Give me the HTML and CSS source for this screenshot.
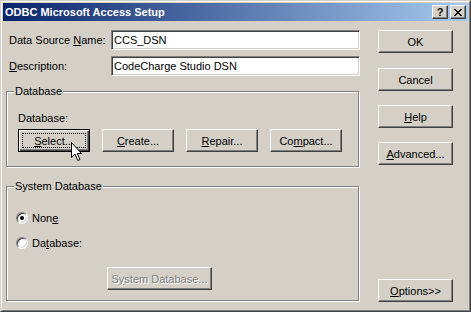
FILE: index.html
```html
<!DOCTYPE html>
<html lang="en">
  <head>
    <meta charset="utf-8" />
    <title>ODBC Microsoft Access Setup</title>
    <link rel="stylesheet" href="styles.css">
  </head>
  <body>
    <div class="window">
      <div class="frame">

        <div class="titlebar">
          <span class="title">ODBC Microsoft Access Setup</span>
          <div class="caption-btns">
            <span class="cap-btn help-glyph">?</span>
            <span class="cap-btn">
              <svg width="8" height="7" viewBox="0 0 8 7" shape-rendering="crispEdges">
                <path d="M0 0h2v1H0z M6 0h2v1H6z M1 1h2v1H1z M5 1h2v1H5z M2 2h4v1H2z M3 3h2v1H3z M2 4h4v1H2z M1 5h2v1H1z M5 5h2v1H5z M0 6h2v1H0z M6 6h2v1H6z" fill="#000"/>
              </svg>
            </span>
          </div>
        </div>

        <div class="content">
          <div class="main">
            <div class="field-row">
              <label class="field-label">Data Source <u>N</u>ame:</label>
              <div class="textbox">CCS_DSN</div>
            </div>
            <div class="field-row second">
              <label class="field-label"><u>D</u>escription:</label>
              <div class="textbox">CodeCharge Studio DSN</div>
            </div>

            <div class="group db-group">
              <span class="legend">Database</span>
              <div class="group-label">Database:</div>
              <div class="btn-row">
                <button class="btn small default"><u>S</u>elect...</button>
                <button class="btn small"><u>C</u>reate...</button>
                <button class="btn small"><u>R</u>epair...</button>
                <button class="btn small">Co<u>m</u>pact...</button>
              </div>
            </div>

            <div class="group sys-group">
              <span class="legend">System Database</span>
              <div class="radio-row">
                <span class="radio checked"></span>
                <span>Non<u>e</u></span>
              </div>
              <div class="radio-row second">
                <span class="radio"></span>
                <span>Da<u>t</u>abase:</span>
              </div>
              <button class="btn sys-btn" disabled>S<u>y</u>stem Database...</button>
            </div>
          </div>

          <div class="side">
            <button class="btn">OK</button>
            <button class="btn cancel">Cancel</button>
            <button class="btn gap"><u>H</u>elp</button>
            <button class="btn gap"><u>A</u>dvanced...</button>
            <button class="btn options"><u>O</u>ptions&gt;&gt;</button>
          </div>
        </div>

      </div>

      <svg class="cursor" width="13" height="20" viewBox="0 0 13 20">
        <path d="M0.5 0.5 L0.5 15.5 L4 12 L6.8 18.5 L9 17.5 L6.3 11.5 L10.5 11.5 Z" fill="#fff" stroke="#000" stroke-width="1" stroke-linejoin="miter"/>
      </svg>
    </div>
  </body>
</html>
```

FILE: styles.css
```css
body {
     margin: 0;
     font-family: "Liberation Sans", Arial, sans-serif;
     font-size: 11px;
     color: #000;
}

.window {
     position: relative;
     width: 471px;
     height: 312px;
     box-sizing: border-box;
     border: 1px solid;
     border-color: #d4d0c8 #404040 #404040 #d4d0c8;
     background-color: #d4d0c8;
}

.frame {
     height: 100%;
     box-sizing: border-box;
     border: 1px solid;
     border-color: #fff #808080 #808080 #fff;
     padding: 1px;
     display: flex;
     flex-direction: column;
}

.titlebar {
     height: 18px;
     flex-shrink: 0;
     display: flex;
     align-items: center;
     justify-content: space-between;
     padding: 0 2px;
     background: linear-gradient(to right, #0a246a, #a6caf0);
}

.title {
     color: #fff;
     font-weight: bold;
     font-size: 11px;
}

.caption-btns {
     display: flex;
     gap: 2px;
}

.cap-btn {
     width: 16px;
     height: 14px;
     box-sizing: border-box;
     display: flex;
     align-items: center;
     justify-content: center;
     background-color: #d4d0c8;
     border: 1px solid;
     border-color: #fff #404040 #404040 #fff;
     box-shadow: inset -1px -1px 0 #808080;
}

.help-glyph {
     font-weight: bold;
     font-size: 11px;
     line-height: 1;
}

.content {
     flex: 1;
     display: flex;
     gap: 18px;
     padding: 9px 0 7px 3px;
}

.main {
     width: 354px;
     display: flex;
     flex-direction: column;
}

.field-row {
     display: flex;
     align-items: center;
     height: 20px;
     padding-left: 3px;
}

.field-row.second {
     margin-top: 6px;
}

.field-label {
     width: 102px;
}

.textbox {
     width: 249px;
     height: 20px;
     box-sizing: border-box;
     border: 1px solid;
     border-color: #808080 #fff #fff #808080;
     box-shadow: inset 1px 1px 0 #404040, inset -1px -1px 0 #d4d0c8;
     background-color: #fff;
     padding-left: 2px;
     line-height: 18px;
}

.group {
     position: relative;
     width: 353px;
     box-sizing: border-box;
     border: 1px solid #808080;
     box-shadow: inset 1px 1px 0 #fff, 1px 1px 0 #fff;
}

.legend {
     position: absolute;
     top: -7px;
     left: 7px;
     padding: 0 1px;
     line-height: 13px;
     background-color: #d4d0c8;
}

.db-group {
     margin-top: 15px;
     height: 76px;
     padding: 20px 0 0 11px;
}

.group-label {
     line-height: 13px;
}

.btn-row {
     display: flex;
     gap: 12px;
     margin-top: 4px;
}

.btn {
     position: relative;
     width: 75px;
     height: 23px;
     box-sizing: border-box;
     padding: 0;
     margin: 0;
     font-family: inherit;
     font-size: 11px;
     color: #000;
     background-color: #d4d0c8;
     border: 1px solid;
     border-color: #fff #404040 #404040 #fff;
     box-shadow: inset -1px -1px 0 #808080;
     border-radius: 0;
}

.btn.small {
     width: 72px;
}

.btn.default {
     border-color: #000;
     box-shadow: inset 1px 1px 0 #fff, inset -1px -1px 0 #404040, inset -2px -2px 0 #808080;
}

.btn.default::after {
     content: "";
     position: absolute;
     top: 3px;
     left: 3px;
     right: 3px;
     bottom: 3px;
     border: 1px dotted #000;
}

.btn:disabled {
     color: #808080;
     text-shadow: 1px 1px 0 #fff;
}

.sys-group {
     margin-top: 19px;
     height: 115px;
     padding: 23px 0 0 9px;
}

.radio-row {
     display: flex;
     align-items: center;
     gap: 4px;
     height: 16px;
}

.radio-row.second {
     margin-top: 9px;
}

.radio {
     position: relative;
     width: 12px;
     height: 12px;
     box-sizing: border-box;
     border-radius: 50%;
     border: 1px solid;
     border-color: #808080 #fff #fff #808080;
     box-shadow: inset 1px 1px 0 #404040, inset -1px -1px 0 #d4d0c8;
     background-color: #fff;
}

.radio.checked::after {
     content: "";
     position: absolute;
     top: 3px;
     left: 3px;
     width: 4px;
     height: 4px;
     border-radius: 50%;
     background-color: #000;
}

.sys-btn {
     width: 105px;
     margin: 16px 0 0 91px;
}

.side {
     width: 75px;
     display: flex;
     flex-direction: column;
}

.side .cancel {
     margin-top: 15px;
}

.side .gap {
     margin-top: 14px;
}

.side .options {
     margin-top: auto;
}

.cursor {
     position: absolute;
     left: 70px;
     top: 141px;
}
```
